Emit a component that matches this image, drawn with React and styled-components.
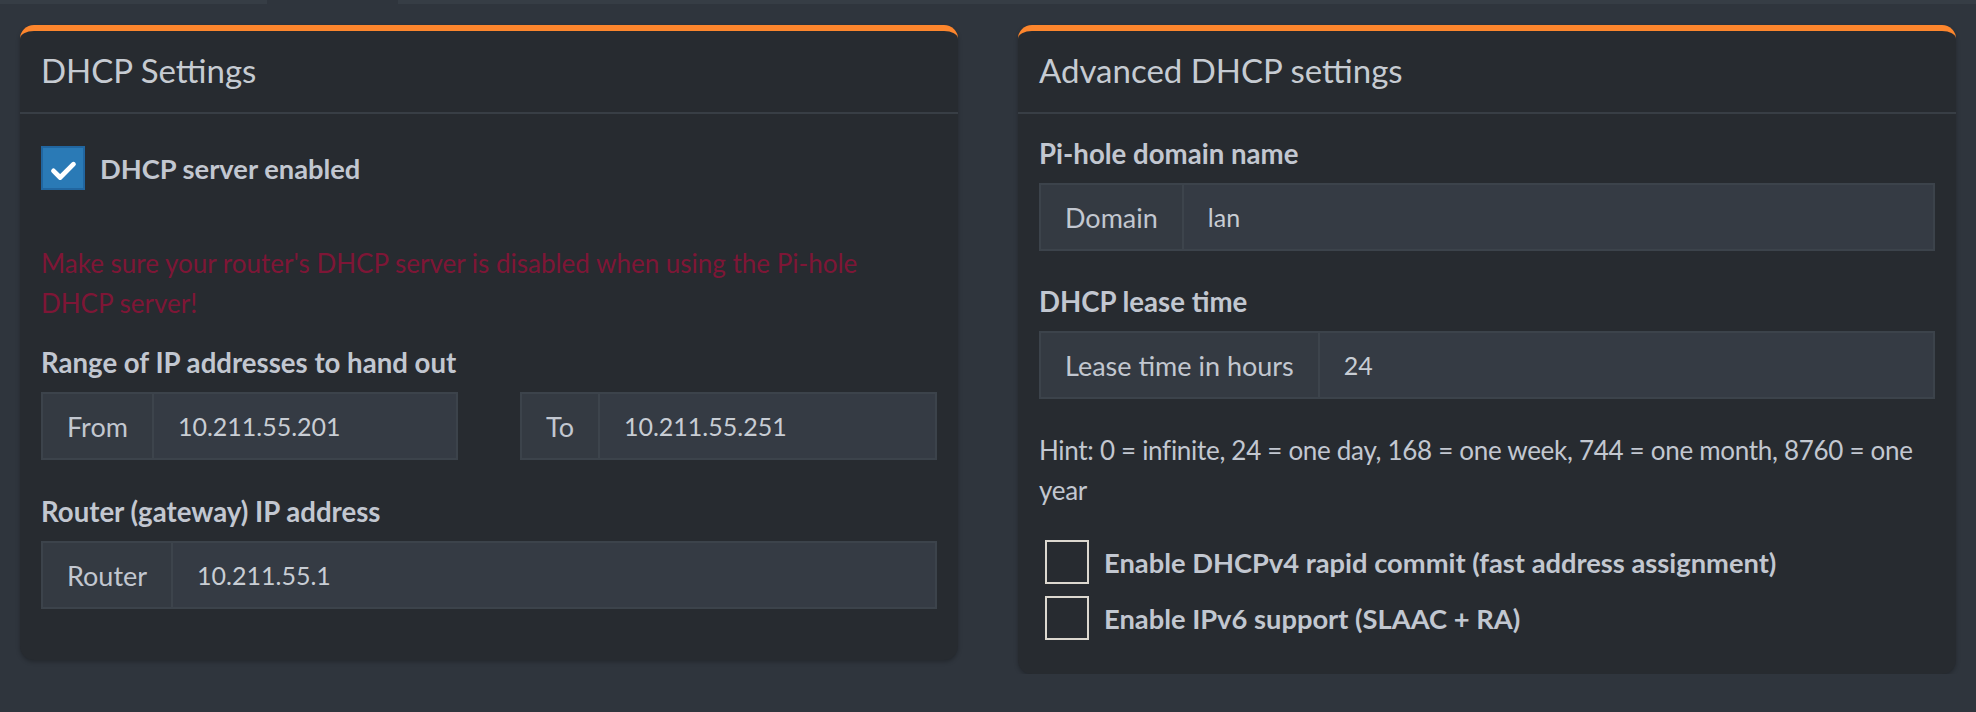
import React from "react"
import styled, { createGlobalStyle } from "styled-components"

const GlobalStyle = createGlobalStyle`
  body {
    margin: 0;
    background: #2f353d;
    font-family: "Lato", "Liberation Sans", sans-serif;
    color: #c2c7d0;
  }
`

const Check = () => (
  <svg width="42" height="42" viewBox="0 0 42 42">
    <polyline
      points="11,24 18,31 32,17"
      fill="none"
      stroke="#fff"
      strokeWidth="5"
      strokeLinecap="round"
      strokeLinejoin="round"
    />
  </svg>
)

const InputGroup = ({ addon, value }) => (
  <Group>
    <Addon>{addon}</Addon>
    <Input>{value}</Input>
  </Group>
)

const App = () => {
  return (
    <>
      <GlobalStyle />
      <TopStrip>
        <Tab />
        <TabGap />
        <Tab $grow />
      </TopStrip>
      <Row>
        <Card>
          <CardHeader>
            <Title>DHCP Settings</Title>
          </CardHeader>
          <CardBody $bottom={51}>
            <CheckRow>
              <CheckBox $checked>
                <Check />
              </CheckBox>
              <CheckLabel>DHCP server enabled</CheckLabel>
            </CheckRow>
            <Warning>
              Make sure your router's DHCP server is disabled when using the Pi-hole DHCP server!
            </Warning>
            <FormGroup>
              <Label>Range of IP addresses to hand out</Label>
              <Split>
                <InputGroup addon="From" value="10.211.55.201" />
                <InputGroup addon="To" value="10.211.55.251" />
              </Split>
            </FormGroup>
            <FormGroup $last>
              <Label>Router (gateway) IP address</Label>
              <InputGroup addon="Router" value="10.211.55.1" />
            </FormGroup>
          </CardBody>
        </Card>
        <Card>
          <CardHeader>
            <Title>Advanced DHCP settings</Title>
          </CardHeader>
          <CardBody $bottom={34}>
            <FormGroup $space={31}>
              <Label>Pi-hole domain name</Label>
              <InputGroup addon="Domain" value="lan" />
            </FormGroup>
            <FormGroup $space={31}>
              <Label>DHCP lease time</Label>
              <InputGroup addon="Lease time in hours" value="24" />
            </FormGroup>
            <Hint>
              Hint: 0 = infinite, 24 = one day, 168 = one week, 744 = one month, 8760 = one year
            </Hint>
            <CheckList>
              <CheckRow $indent>
                <CheckBox />
                <CheckLabel>Enable DHCPv4 rapid commit (fast address assignment)</CheckLabel>
              </CheckRow>
              <CheckRow $indent>
                <CheckBox />
                <CheckLabel>Enable IPv6 support (SLAAC + RA)</CheckLabel>
              </CheckRow>
            </CheckList>
          </CardBody>
        </Card>
      </Row>
    </>
  )
}

export default App

const TopStrip = styled.div`
  display: flex;
  height: 4px;
`

const Tab = styled.div`
  width: 267px;
  flex: ${props => (props.$grow ? 1 : "none")};
  background: #363d45;
`

const TabGap = styled.div`
  width: 131px;
`

const Row = styled.div`
  display: grid;
  grid-template-columns: 1fr 1fr;
  gap: 60px;
  align-items: start;
  padding: 21px 20px 0;
`

const Card = styled.section`
  background: #272b30;
  border-top: 6px solid #fd862d;
  border-radius: 14px;
  box-shadow: 0 2px 4px rgba(0, 0, 0, 0.25);
`

const CardHeader = styled.header`
  height: 83px;
  box-sizing: border-box;
  display: flex;
  align-items: center;
  padding: 0 21px 4px;
  border-bottom: 2px solid #383e45;
`

const Title = styled.h3`
  margin: 0;
  font-size: 33px;
  font-weight: 400;
  color: #c6cbd2;
`

const CardBody = styled.div`
  padding: 20px 21px ${props => props.$bottom}px 21px;
`

const CheckRow = styled.div`
  display: flex;
  align-items: center;
  gap: 15px;
  margin-top: ${props => (props.$indent ? 0 : 12)}px;
  padding-left: ${props => (props.$indent ? 6 : 0)}px;
`

const CheckList = styled.div`
  display: flex;
  flex-direction: column;
  gap: 12px;
  margin-top: 30px;
`

const CheckBox = styled.span`
  box-sizing: border-box;
  width: 44px;
  height: 44px;
  flex: none;
  display: flex;
  align-items: center;
  justify-content: center;
  background: ${props => (props.$checked ? "#2a7ab6" : "transparent")};
  border: 2px solid ${props => (props.$checked ? "#2166a0" : "#dcd8cf")};
`

const CheckLabel = styled.span`
  font-size: 27.3px;
  font-weight: 700;
  color: #c2c7d0;
`

const Warning = styled.p`
  margin: 53px 0 20px;
  padding-right: 40px;
  font-size: 26px;
  line-height: 40px;
  color: #7e1636;
`

const FormGroup = styled.div`
  margin-bottom: ${props => (props.$last ? 0 : props.$space || 32)}px;
`

const Label = styled.div`
  font-size: 27.6px;
  font-weight: 700;
  line-height: 40px;
  margin-bottom: 9px;
`

const Split = styled.div`
  display: grid;
  grid-template-columns: 1fr 1fr;
  gap: 62px;
`

const Group = styled.div`
  display: flex;
  height: 68px;
  box-sizing: border-box;
  border: 2px solid #3c434b;
  font-size: 27px;
`

const Addon = styled.div`
  display: flex;
  align-items: center;
  padding: 0 24px;
  background: #343a42;
  border-right: 2px solid #3d444c;
  color: #c2c7d0;
`

const Input = styled.div`
  flex: 1;
  display: flex;
  align-items: center;
  padding: 0 24px;
  background: #353b44;
  color: #c8cdd4;
  font-size: 25px;
`

const Hint = styled.p`
  margin: 0;
  font-size: 26px;
  letter-spacing: -0.3px;
  line-height: 40px;
`
